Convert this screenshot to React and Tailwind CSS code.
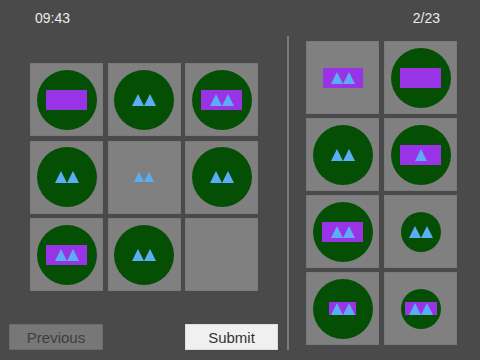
import React from 'react'

const font = { fontFamily: '"Liberation Sans", Arial, sans-serif' }

function Triangles({ count, size = 12 }) {
  const h = size
  return (
    <svg width={size * count} height={h} viewBox={`0 0 ${size * count} ${h}`} className="block">
      {Array.from({ length: count }).map((_, i) => (
        <polygon
          key={i}
          points={`${i * size},${h} ${i * size + size / 2},0 ${(i + 1) * size},${h}`}
          fill="#5cadf7"
        />
      ))}
    </svg>
  )
}

function Shape({ rect, tri, triSize }) {
  const inner = tri ? <Triangles count={tri} size={triSize} /> : null
  if (rect) {
    return (
      <div className={`flex items-center justify-center bg-[#9933e6] ${rect}`}>
        {inner}
      </div>
    )
  }
  return inner
}

function Cell({ circle, rect, tri, triSize }) {
  return (
    <div className="w-[73px] h-[73px] bg-[#808080] border border-[#7a7a7a] flex items-center justify-center">
      {circle ? (
        <div className={`rounded-full bg-[#054f05] flex items-center justify-center ${circle}`}>
          <Shape rect={rect} tri={tri} triSize={triSize} />
        </div>
      ) : (
        <Shape rect={rect} tri={tri} triSize={triSize} />
      )}
    </div>
  )
}

const big = 'w-[60px] h-[60px]'
const small = 'w-[40px] h-[40px]'
const wide = 'w-[41px] h-[20px]'

const leftCells = [
  { circle: big, rect: wide },
  { circle: big, tri: 2 },
  { circle: big, rect: wide, tri: 2 },
  { circle: big, tri: 2 },
  { tri: 2, triSize: 10 },
  { circle: big, tri: 2 },
  { circle: big, rect: wide, tri: 2 },
  { circle: big, tri: 2 },
  {},
]

const rightCells = [
  { rect: 'w-[40px] h-[20px]', tri: 2 },
  { circle: big, rect: wide },
  { circle: big, tri: 2 },
  { circle: big, rect: wide, tri: 1 },
  { circle: big, rect: wide, tri: 2 },
  { circle: small, tri: 2 },
  { circle: big, rect: 'w-[27px] h-[13px]', tri: 2 },
  { circle: small, rect: 'w-[32px] h-[13px]', tri: 2 },
]

export default function App() {
  return (
    <div className="w-[480px] h-[360px] bg-[#4a4a4a] flex flex-col text-[#ececec]" style={font}>
      <div className="h-[36px] flex items-center justify-between pl-[35px] pr-[40px] pt-[1px] text-[14px]">
        <span>09:43</span>
        <span>2/23</span>
      </div>

      <div className="flex flex-1">
        <div className="w-[287px] flex flex-col pb-[10px]">
          <div className="pl-[30px] pt-[27px] grid grid-cols-[repeat(3,73px)] gap-[4.5px]">
            {leftCells.map((c, i) => (
              <Cell key={i} {...c} />
            ))}
          </div>
          <div className="mt-auto flex justify-between pl-[9px] pr-[9px]">
            <button className="w-[94px] h-[26px] bg-[#777777] border border-[#6c6c6c] text-[#3e3e3e] text-[15px] leading-none">
              Previous
            </button>
            <button className="w-[93px] h-[26px] bg-[#f0f0f0] border border-[#dddddd] text-[#333333] text-[15px] leading-none">
              Submit
            </button>
          </div>
        </div>

        <div className="w-[2px] h-[314px] bg-[#7a7a7a]" />

        <div className="pl-[17px] pt-[5px]">
          <div className="grid grid-cols-[repeat(2,73px)] gap-x-[5px] gap-y-[4px]">
            {rightCells.map((c, i) => (
              <Cell key={i} {...c} />
            ))}
          </div>
        </div>
      </div>
    </div>
  )
}
